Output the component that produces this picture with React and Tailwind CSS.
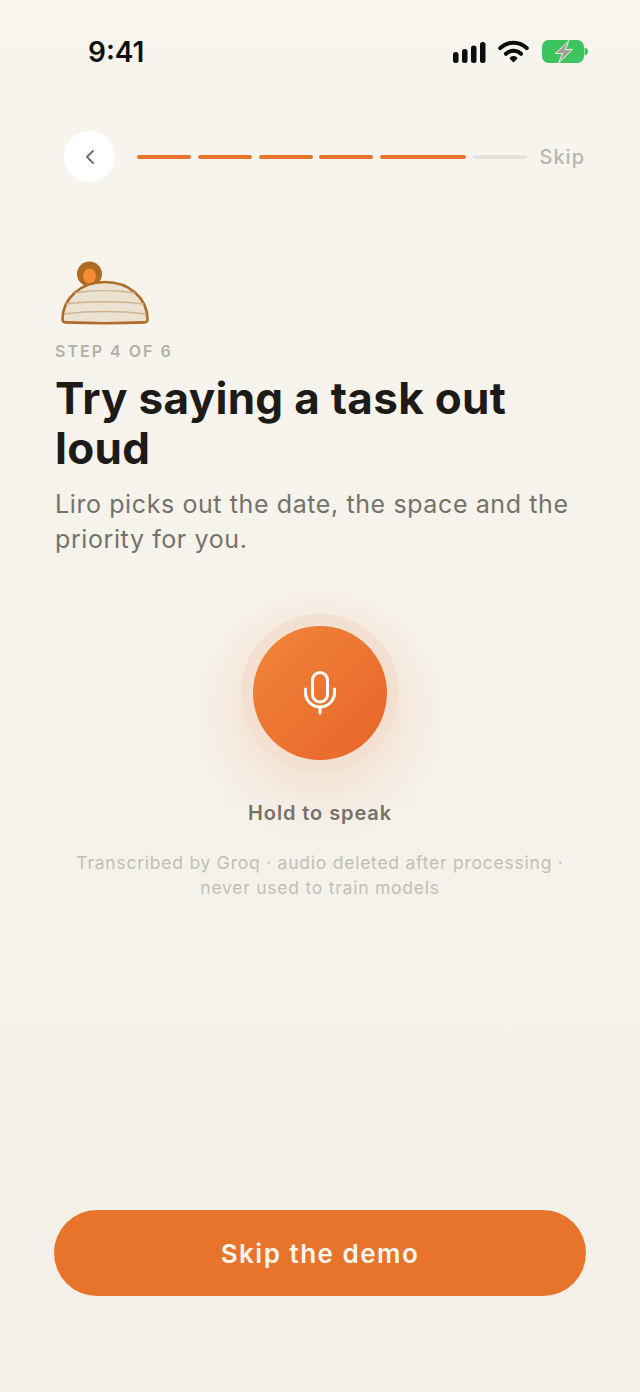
import React from 'react';
import { ChevronLeft } from 'lucide-react';

const segments = [
  { width: 'w-[54px]', active: true },
  { width: 'w-[54px]', active: true },
  { width: 'w-[54px]', active: true },
  { width: 'w-[54px]', active: true },
  { width: 'w-[86px]', active: true },
  { width: 'w-[54px]', active: false },
];

function StatusBar() {
  return (
    <div className="flex h-[80px] items-start justify-between pl-[88px] pr-[52px] pt-[36px]">
      <span className="text-[28px] leading-[32px] font-semibold text-[#111111]">9:41</span>
      <div className="flex items-start pt-[4px]">
        {/* signal */}
        <svg width="33" height="23" viewBox="0 0 33 23" fill="#0d0d0d">
          <rect x="0" y="12" width="5.500" height="11" rx="2.500" />
          <rect x="9" y="9" width="5.500" height="14" rx="2.500" />
          <rect x="18" y="5.500" width="5.500" height="17.500" rx="2.500" />
          <rect x="27" y="2" width="5.500" height="21" rx="2.500" />
        </svg>
        {/* wifi */}
        <svg width="31" height="23" viewBox="0 0 31 23" fill="none" stroke="#0d0d0d" strokeWidth="4" strokeLinecap="round" className="ml-[12px]">
          <path d="M2.200 8.200C9.500 .8 21.500 .8 28.800 8.200" />
          <path d="M8 13.800C12.200 9.800 18.800 9.800 23 13.800" />
          <path d="M15.500 21 12.800 18.200C14.300 16.900 16.700 16.900 18.200 18.200Z" fill="#0d0d0d" strokeWidth="2.200" strokeLinejoin="round" />
        </svg>
        {/* battery */}
        <svg width="46" height="23" viewBox="0 0 46 23" className="ml-[13px]">
          <rect x="0" y="0" width="42" height="23" rx="6.500" fill="#3dc45e" />
          <path d="M42.500 7.500c2.200.4 3.500 2 3.500 4s-1.300 3.600-3.500 4z" fill="#3dc45e" />
          <path d="M27 .5 13.500 13.500H20.500L16.500 23 30.500 9.500H23.500Z" fill="#a0a396" stroke="#eef0e4" strokeWidth="1" strokeLinejoin="round" />
        </svg>
      </div>
    </div>
  );
}

function Mascot() {
  return (
    <svg width="92" height="68" viewBox="0 0 92 68" className="ml-[4px]">
      <circle cx="30.500" cy="14" r="12.500" fill="#ad6a22" />
      <ellipse cx="30.500" cy="16" rx="6.500" ry="7.500" fill="#f38c33" />
      <path d="M3.500 59.500C3.500 38 22 22 46 22S88.500 38 88.500 59.500C88.500 61.500 87.500 62.300 85.500 62.400Q46 64 6.500 62.400C4.500 62.300 3.500 61.500 3.500 59.500Z" fill="#ebe2d1" stroke="#b06d2a" strokeWidth="2.600" />
      <path d="M16 33C34 30 58 30 76 33" fill="none" stroke="#cfb48f" strokeWidth="1.600" />
      <path d="M7 44C30 41 62 41 85 44" fill="none" stroke="#cfb48f" strokeWidth="1.600" />
      <path d="M5 54C30 51 62 51 87 54" fill="none" stroke="#cfb48f" strokeWidth="1.600" />
    </svg>
  );
}

function MicIcon() {
  return (
    <svg width="32" height="44" viewBox="0 0 32 44" fill="none" stroke="#ffffff" strokeWidth="3" strokeLinecap="round">
      <rect x="8.500" y="1.500" width="15" height="29.500" rx="7.500" />
      <path d="M1.500 18V21.500A14.500 14.500 0 0 0 30.500 21.500V18" />
      <path d="M16 36V42" />
    </svg>
  );
}

export default function App() {
  return (
    <div className="flex h-[1392px] w-[640px] flex-col overflow-hidden bg-gradient-to-b from-[#f8f5ef] to-[#f3f0e8] font-['Inter',sans-serif]">
      <StatusBar />

      {/* Progress header */}
      <div className="mt-[51px] flex h-[51px] items-center pl-[64px] pr-[55px]">
        <button className="flex h-[51px] w-[51px] items-center justify-center rounded-full bg-white text-[#6f6c66]">
          <ChevronLeft size={24} strokeWidth={1.800} />
        </button>
        <div className="ml-[22px] flex gap-[6.800px]">
          {segments.map((seg, i) => (
            <div key={i} className={`h-[4px] rounded-full ${seg.width} ${seg.active ? 'bg-[#e8742c]' : 'bg-[#e4e1da]'}`} />
          ))}
        </div>
        <span className="ml-auto text-[20px] font-medium tracking-[1px] text-[#b9b6ac]">Skip</span>
      </div>

      <div className="flex flex-1 flex-col px-[55px]">
        <div className="mt-[78px]">
          <Mascot />
        </div>
        <p className="mt-[11px] text-[16px] leading-[24px] font-semibold tracking-[2px] text-[#b3b1a6]">STEP 4 OF 6</p>
        <h1 className="mt-[10px] text-[44px] leading-[50px] font-bold tracking-[0.300px] text-[#1c1b18]">
          Try saying a task out loud
        </h1>
        <p className="mt-[14px] text-[25px] leading-[35px] tracking-[0.600px] text-[#75726a]">
          Liro picks out the date, the space and the priority for you.
        </p>

        {/* Mic */}
        <div className="mt-[57px] flex flex-col items-center">
          <div className="flex h-[158px] w-[158px] items-center justify-center rounded-full bg-[#f4e0d1] shadow-[0_16px_46px_16px_rgba(238,140,80,0.14)]">
            <div className="flex h-[134px] w-[134px] items-center justify-center rounded-full bg-gradient-to-br from-[#f08538] to-[#e8642b]">
              <MicIcon />
            </div>
          </div>
          <p className="mt-[27px] text-[20px] leading-[28px] font-semibold tracking-[0.900px] text-[#75726a]">Hold to speak</p>
          <p className="mt-[23px] text-center text-[17.500px] leading-[25px] tracking-[0.760px] text-[#c2bfb5]">
            Transcribed by Groq · audio deleted after processing ·
            <br />
            never used to train models
          </p>
        </div>

        <button className="mt-auto mb-[96px] flex h-[86px] w-[532px] -ml-[1px] shrink-0 items-center justify-center rounded-[43px] bg-[#e8742c] text-[26px] font-semibold tracking-[1.500px] text-[#fdf6ee]">
          Skip the demo
        </button>
      </div>
    </div>
  );
}
